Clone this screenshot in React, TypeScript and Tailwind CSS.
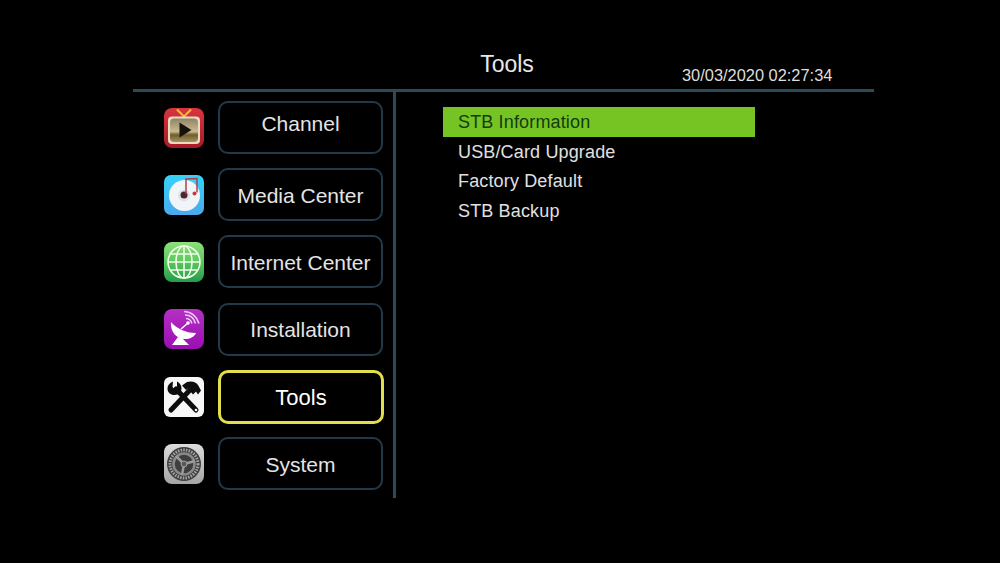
const menu = ["Channel", "Media Center", "Internet Center", "Installation", "Tools", "System"];
const items = ["STB Information", "USB/Card Upgrade", "Factory Default", "STB Backup"];

function TvIcon() {
  return (
    <svg viewBox="0 0 40 40" className="w-10 h-10 shrink-0">
      <defs>
        <linearGradient id="tvbg" x1="0" y1="0" x2="0" y2="1">
          <stop offset="0" stopColor="#d8353f" />
          <stop offset="1" stopColor="#a81a28" />
        </linearGradient>
        <linearGradient id="tvscreen" x1="0" y1="0" x2="0" y2="1">
          <stop offset="0" stopColor="#8f8468" />
          <stop offset="0.55" stopColor="#c9b98e" />
          <stop offset="0.7" stopColor="#6f5c30" />
          <stop offset="1" stopColor="#a8925c" />
        </linearGradient>
      </defs>
      <rect width="40" height="40" rx="8" fill="url(#tvbg)" />
      <path d="M13 1.500l7 7 7-7" fill="none" stroke="#f0b93a" strokeWidth="2.200" />
      <rect x="4" y="8.500" width="32" height="27.500" rx="4" fill="#e9dcc0" />
      <rect x="6" y="10.500" width="28" height="23.500" rx="4" fill="url(#tvscreen)" />
      <path d="M15.500 14.500l12 7.500-12 7.500z" fill="#15120c" />
    </svg>
  );
}

function MusicIcon() {
  return (
    <svg viewBox="0 0 40 40" className="w-10 h-10 shrink-0">
      <defs>
        <linearGradient id="musicbg" x1="0" y1="0" x2="0" y2="1">
          <stop offset="0" stopColor="#35d3f8" />
          <stop offset="1" stopColor="#4aa9ee" />
        </linearGradient>
      </defs>
      <rect width="40" height="40" rx="7" fill="url(#musicbg)" />
      <circle cx="20.500" cy="20.500" r="15.500" fill="#f2f5f8" />
      <circle cx="20" cy="20.500" r="6" fill="#dfe4ea" />
      <circle cx="20" cy="20" r="3.500" fill="#4d2630" />
      <path d="M22 19V4l11-.5v14" fill="none" stroke="#b0404e" strokeWidth="1.500" />
      <circle cx="30.500" cy="18.500" r="2" fill="#d2343e" />
    </svg>
  );
}

function GlobeIcon() {
  return (
    <svg viewBox="0 0 40 40" className="w-10 h-10 shrink-0">
      <defs>
        <linearGradient id="globebg" x1="0" y1="0" x2="0" y2="1">
          <stop offset="0" stopColor="#8fe07a" />
          <stop offset="0.5" stopColor="#58c85c" />
          <stop offset="1" stopColor="#259a4c" />
        </linearGradient>
      </defs>
      <rect width="40" height="40" rx="8" fill="url(#globebg)" />
      <g fill="none" stroke="#f2fbe9" strokeWidth="1.600">
        <circle cx="20" cy="20" r="16" />
        <ellipse cx="20" cy="20" rx="8" ry="16" />
        <path d="M20 4v32M4 20h32M6.500 12h27M6.500 28h27" />
      </g>
    </svg>
  );
}

function DishIcon() {
  return (
    <svg viewBox="0 0 40 40" className="w-10 h-10 shrink-0">
      <defs>
        <linearGradient id="dishbg" x1="0" y1="0" x2="0" y2="1">
          <stop offset="0" stopColor="#b52fc4" />
          <stop offset="1" stopColor="#9a0fb2" />
        </linearGradient>
      </defs>
      <rect width="40" height="40" rx="8" fill="url(#dishbg)" />
      <path d="M7 13c5 6 14 11 25 11-2 4-6 6-11 6C12 30 6 22 7 13z" fill="#fff" />
      <path d="M14 28l-6 8h17l-7-7z" fill="#fff" />
      <path d="M17 20l7-6" stroke="#fff" strokeWidth="1.500" />
      <circle cx="24" cy="14" r="1.800" fill="#fff" />
      <g fill="none" stroke="#f0d0f5" strokeWidth="1.500">
        <path d="M22 9.500c3 0 5 2 6 5" />
        <path d="M21 6c5 0 9 3 10.500 8.500" />
        <path d="M20 2.500c7 0 13 5 15 12" />
      </g>
    </svg>
  );
}

function ToolsIcon() {
  return (
    <svg viewBox="0 0 40 40" className="w-10 h-10 shrink-0">
      <rect width="40" height="40" rx="6" fill="#f7f7f7" />
      <path d="M12 12l20 21" stroke="#0c0c0c" strokeWidth="5" strokeLinecap="round" />
      <path d="M9 4.500C5.500 6 3.500 8.500 3.500 11.500c0 4 3 6.500 7 6.500 4.500 0 7-3 7-6.500 0-3-1.500-5.500-4.500-7l0 5.500-2.500 2-2-2z" fill="#0c0c0c" />
      <path d="M25 14L7 33" stroke="#0c0c0c" strokeWidth="5" strokeLinecap="round" />
      <path d="M18 8.500l5-3.500c5-1.500 9 0 11 3l3 5.500-3 4-2-3-3 3-5-6-2 1.500z" fill="#0c0c0c" />
      <circle cx="32" cy="33" r="1.300" fill="#f7f7f7" />
    </svg>
  );
}

function SettingsIcon() {
  return (
    <svg viewBox="0 0 40 40" className="w-10 h-10 shrink-0">
      <defs>
        <linearGradient id="gearbg" x1="0" y1="0" x2="0" y2="1">
          <stop offset="0" stopColor="#dcdcdc" />
          <stop offset="1" stopColor="#a4a4a4" />
        </linearGradient>
      </defs>
      <rect width="40" height="40" rx="8" fill="url(#gearbg)" />
      <circle cx="20" cy="20" r="17" fill="#3e3e3e" />
      <circle cx="20" cy="20" r="14" fill="none" stroke="#a4a4a4" strokeWidth="3" strokeDasharray="1.500 1.200" />
      <circle cx="20" cy="20" r="10.500" fill="none" stroke="#8a8a8a" strokeWidth="2.500" />
      <g stroke="#9a9a9a" strokeWidth="2.500">
        <path d="M20 20L12 12M20 20L31 17M20 20L18 31" />
      </g>
      <circle cx="20" cy="20" r="3" fill="#5a5a5a" stroke="#a4a4a4" />
    </svg>
  );
}

const icons = [TvIcon, MusicIcon, GlobeIcon, DishIcon, ToolsIcon, SettingsIcon];

export default function App() {
  return (
    <div className="w-[1000px] h-[563px] bg-black text-[#e8e8e8] overflow-hidden font-['Liberation_Sans',Arial,sans-serif]">
      <div className="ml-[133px] w-[741px] pt-[50px]">
        {/* Header */}
        <div className="flex h-[42px] border-b-[3px] border-[#2c4a58]">
          <div className="ml-[324px] w-[100px] pt-px text-[23px] leading-[26px] text-center">Tools</div>
          <div className="ml-[125px] pt-[15px] text-[16.4px] leading-[20px] text-[#dedede]">30/03/2020 02:27:34</div>
        </div>

        <div className="flex h-[406px]">
          {/* Left menu */}
          <div className="w-[260px] pl-[31px] pt-[9px] flex flex-col gap-[14.2px]">
            {menu.map((label, i) => {
              const Icon = icons[i];
              const active = label === "Tools";
              return (
                <div key={label} className="flex items-start gap-[14px] h-[53px]">
                  <div className={i >= 4 ? "mt-[7px]" : "mt-[6.5px]"}>
                    <Icon />
                  </div>
                  <div
                    className={`flex items-center justify-center rounded-[10px] ${
                      active
                        ? "w-[166px] h-[54px] border-[3px] border-[#e3df4a] text-white text-[22px]"
                        : "w-[165px] h-[53px] border-2 border-[#22394a] text-[#e4e4e4] text-[21px]"
                    } ${i === 0 ? "pb-[7px]" : "pt-[2px]"}`}
                  >
                    {label}
                  </div>
                </div>
              );
            })}
          </div>

          {/* Right list */}
          <div className="flex-1 border-l-[3px] border-[#2c4a58] pl-[47px] pt-[15px]">
            {items.map((item, i) => (
              <div
                key={item}
                className={`w-[312px] pl-[15px] flex items-center text-[18px] tracking-[0.15px] ${
                  i === 0 ? "bg-[#76c424] text-[#123c10]" : "text-[#e0e0e0]"
                } ${i === 2 ? "h-[29px]" : "h-[30px]"}`}
              >
                {item}
              </div>
            ))}
          </div>
        </div>
      </div>
    </div>
  );
}
